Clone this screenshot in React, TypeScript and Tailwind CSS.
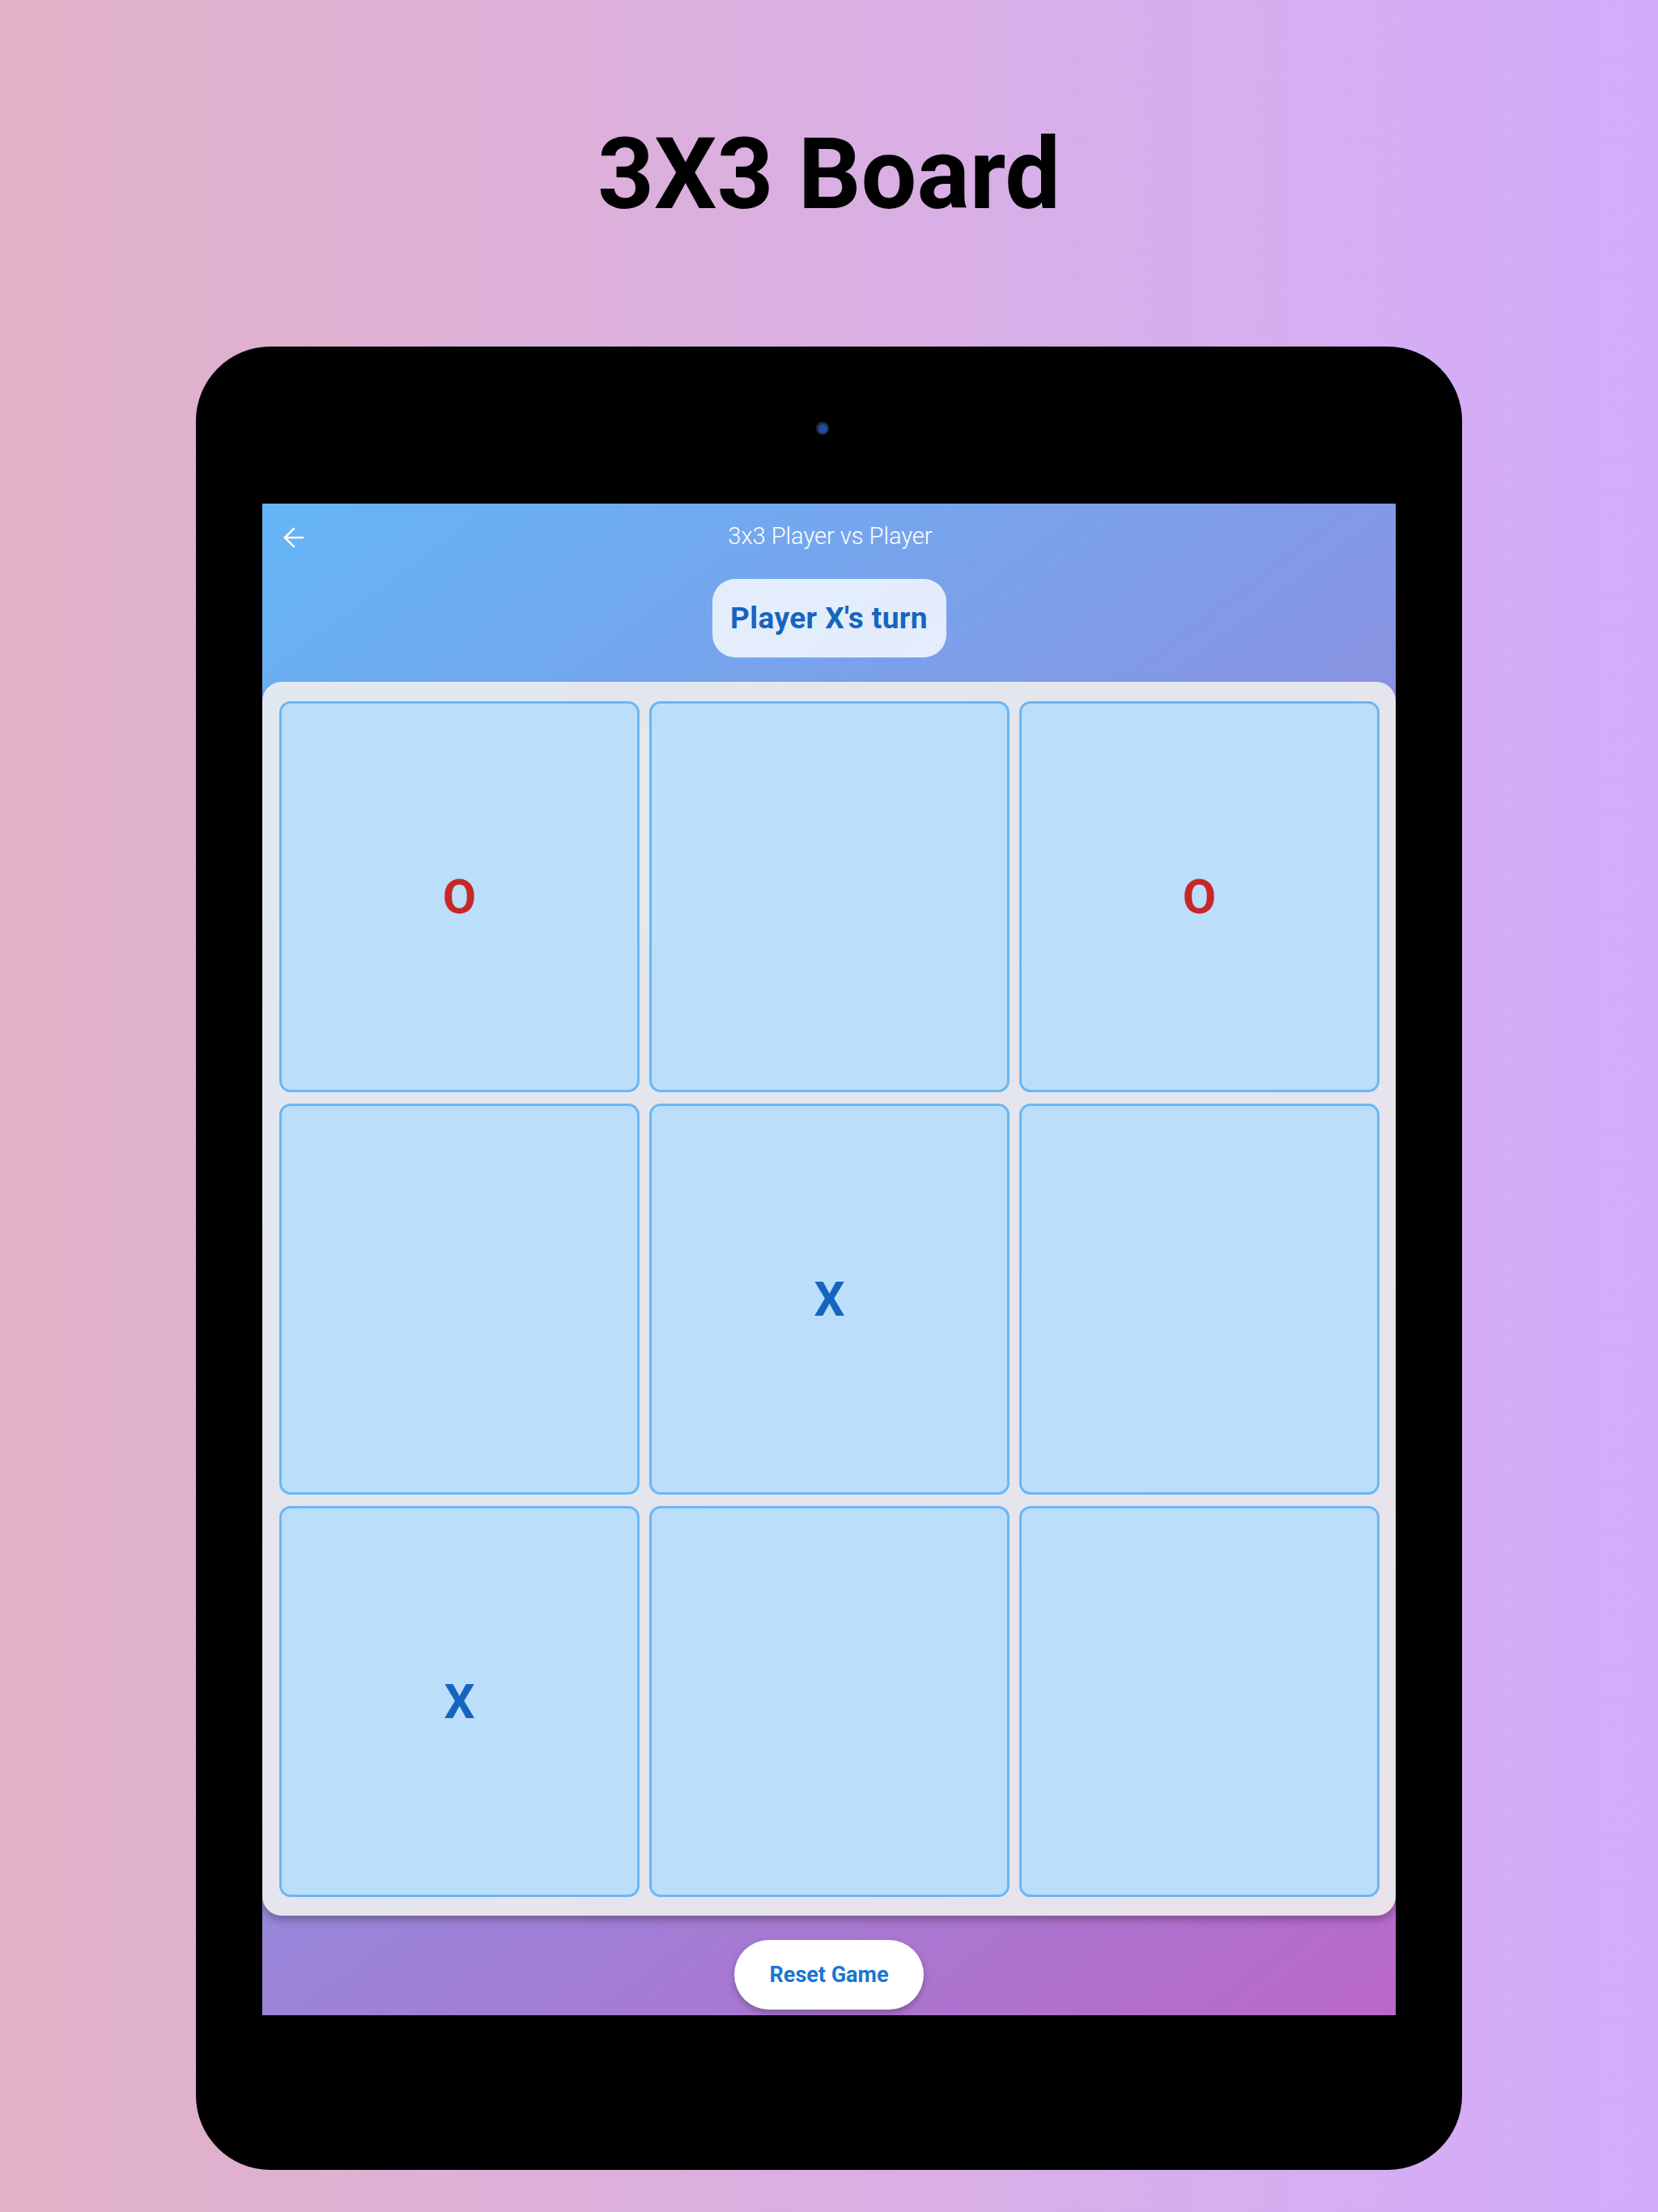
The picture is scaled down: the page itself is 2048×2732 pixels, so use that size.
import React, { useState } from 'react';
import { ArrowLeft } from 'lucide-react';

type Mark = 'X' | 'O' | null;

const initialBoard: Mark[] = ['O', null, 'O', null, 'X', null, 'X', null, null];

const Cell: React.FC<{ value: Mark; onClick: () => void }> = ({ value, onClick }) => (
  <button
    onClick={onClick}
    className="h-[483px] rounded-[14px] border-[3px] border-[#6ab7f5] bg-[#bbdefb] flex items-center justify-center"
  >
    {value === 'X' && <span className="text-[60px] font-bold leading-none text-[#1565c0]">X</span>}
    {value === 'O' && <span className="text-[60px] font-bold leading-none text-[#c62828]">O</span>}
  </button>
);

export default function App() {
  const [board, setBoard] = useState<Mark[]>(initialBoard);
  const [turn, setTurn] = useState<'X' | 'O'>('X');

  const play = (i: number) => {
    if (board[i]) return;
    const next = [...board];
    next[i] = turn;
    setBoard(next);
    setTurn(turn === 'X' ? 'O' : 'X');
  };

  const reset = () => {
    setBoard(Array(9).fill(null));
    setTurn('X');
  };

  return (
    <div
      className="min-h-screen w-full bg-gradient-to-r from-[#e1b1c6] to-[#d3acfc] pt-[155px] pb-[52px] flex flex-col items-center"
      style={{ fontFamily: "Roboto, 'Noto Sans', sans-serif" }}
    >
      <h1 className="text-[122px] font-bold leading-none text-black">3X3 Board</h1>

      {/* tablet frame */}
      <div className="mt-[151px] w-[1564px] h-[2252px] rounded-[92px] bg-black flex flex-col items-center pt-[93px]">
        <div className="mr-[16px] w-[16px] h-[16px] rounded-full bg-[#262a33] flex items-center justify-center">
          <div className="w-[11px] h-[11px] rounded-full bg-[#1f4fa8]" />
        </div>

        {/* screen */}
        <div className="mt-[85px] w-[1400px] h-[1867px] bg-[linear-gradient(143deg,#64b5f6,#ba68c8)] flex flex-col items-center">
          <div className="relative w-full h-[80px] flex items-center justify-center">
            <button className="absolute left-[20px] top-[23px] text-white">
              <ArrowLeft size={38} strokeWidth={1.6} />
            </button>
            <span className="mt-[2px] ml-[3px] text-[29px] font-light text-white">3x3 Player vs Player</span>
          </div>

          <div className="mt-[13px] w-[289px] h-[97px] rounded-[28px] bg-white/80 flex items-center justify-center">
            <span className="text-[37px] font-bold tracking-[0.4px] text-[#1565c0]">
              Player {turn}'s turn
            </span>
          </div>

          <div className="mt-[30px] w-full rounded-[24px] bg-[#eeeeee]/90 pt-[24px] pb-[23px] pl-[21px] pr-[20px] shadow-[0_6px_10px_rgba(0,0,0,0.25)]">
            <div className="grid grid-cols-3 gap-x-[12px] gap-y-[14px]">
              {board.map((v, i) => (
                <Cell key={i} value={v} onClick={() => play(i)} />
              ))}
            </div>
          </div>

          <button
            onClick={reset}
            className="mt-[30px] w-[234px] h-[86px] rounded-full bg-white shadow-[0_4px_8px_rgba(0,0,0,0.25)] text-[27px] font-bold text-[#1976d2]"
          >
            Reset Game
          </button>
        </div>
      </div>
    </div>
  );
}
